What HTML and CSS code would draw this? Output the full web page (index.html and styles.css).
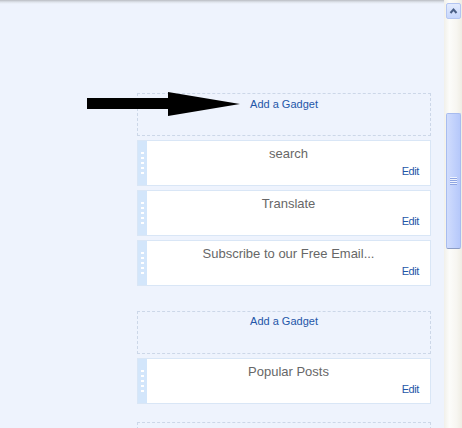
FILE: index.html
```html
<!DOCTYPE html>
<html>
<head>
<meta charset="utf-8">
<title>Layout</title>
<link rel="stylesheet" href="styles.css">
</head>
<body>
<div class="window">
  <div class="main">
    <svg class="arrow" width="154" height="25" viewBox="0 0 154 25" aria-hidden="true">
      <polygon points="0,6 81,6 81,0 153,12 81,24 81,17 0,17" fill="#000"/>
    </svg>
    <div class="column">
      <div class="add-gadget"><a class="link">Add a Gadget</a></div>
      <div class="widget-list">
        <div class="widget">
          <div class="handle"><span class="grip"></span></div>
          <div class="body"><div class="title">search</div><a class="edit">Edit</a></div>
        </div>
        <div class="widget">
          <div class="handle"><span class="grip"></span></div>
          <div class="body"><div class="title">Translate</div><a class="edit">Edit</a></div>
        </div>
        <div class="widget">
          <div class="handle"><span class="grip"></span></div>
          <div class="body"><div class="title">Subscribe to our Free Email...</div><a class="edit">Edit</a></div>
        </div>
      </div>
      <div class="add-gadget section-gap"><a class="link">Add a Gadget</a></div>
      <div class="widget-list">
        <div class="widget">
          <div class="handle"><span class="grip"></span></div>
          <div class="body"><div class="title">Popular Posts</div><a class="edit">Edit</a></div>
        </div>
      </div>
      <div class="add-gadget next-section"></div>
    </div>
  </div>
  <div class="scrollbar">
    <div class="sb-button">
      <svg width="13" height="14" viewBox="0 0 13 14" aria-hidden="true">
        <polyline points="3.5,9 6.5,5.5 9.5,9" fill="none" stroke="#4a5f86" stroke-width="2"/>
      </svg>
    </div>
    <div class="sb-thumb"><span class="sb-grip"></span></div>
  </div>
</div>
</body>
</html>
```

FILE: styles.css
```css
html, body {
  margin: 0;
  padding: 0;
}

body {
  width: 462px;
  height: 428px;
  overflow: hidden;
  font-family: "Liberation Sans", Arial, sans-serif;
  background: #f6f5ef;
}

.window {
  display: flex;
  width: 462px;
  height: 428px;
}

.main {
  position: relative;
  flex: none;
  width: 444px;
  height: 428px;
  box-sizing: border-box;
  padding-top: 93px;
  overflow: hidden;
  background:
    linear-gradient(to bottom, #b9bcc2 0, #dde2ea 2px, #eef3fd 4px) no-repeat top left / 100% 4px,
    #eef3fd;
}

.arrow {
  position: absolute;
  left: 87px;
  top: 92px;
}

.column {
  margin-left: 137px;
  width: 294px;
}

.add-gadget {
  box-sizing: border-box;
  height: 43px;
  border: 1px dashed #ccd7e8;
  padding-top: 4px;
  text-align: center;
  font-size: 11px;
  line-height: 13px;
}

.link,
.edit {
  color: #2356a8;
  text-decoration: none;
}

.section-gap {
  margin-top: 25px;
  padding-top: 3px;
}

.next-section {
  margin-top: 18px;
}

.widget-list {
  display: flex;
  flex-direction: column;
  gap: 4px;
  margin-top: 4px;
}

.widget {
  display: flex;
  box-sizing: border-box;
  height: 46px;
  border: 1px solid #d9e6f6;
  background: #ffffff;
}

.handle {
  flex: none;
  width: 9px;
  background: #d3e6fb;
  display: flex;
  align-items: center;
  justify-content: center;
}

.grip {
  display: block;
  width: 3px;
  height: 22px;
  background: repeating-linear-gradient(to bottom, #ffffff 0 2px, transparent 2px 5px);
}

.body {
  flex: 1;
  display: flex;
  flex-direction: column;
  padding-top: 5px;
}

.title {
  text-align: center;
  font-size: 13px;
  line-height: 15px;
  color: #676767;
}

.edit {
  align-self: flex-end;
  margin-top: 4px;
  margin-right: 11px;
  font-size: 11px;
  line-height: 13px;
  letter-spacing: -0.4px;
}

.scrollbar {
  flex: none;
  width: 18px;
  height: 428px;
  box-sizing: border-box;
  padding: 3px 1px 0 2px;
  background: linear-gradient(to right, #f1f0ea 0, #fcfcfa 30%, #f7f6f1 70%, #efede4 100%);
}

.sb-button {
  box-sizing: border-box;
  width: 15px;
  height: 16px;
  border: 1px solid #b3c5f2;
  border-radius: 2px;
  background: linear-gradient(to bottom, #e3ebfe, #c6d6fc);
  display: flex;
  align-items: center;
  justify-content: center;
}

.sb-thumb {
  box-sizing: border-box;
  width: 15px;
  height: 136px;
  margin-top: 94px;
  border: 1px solid #a8bcef;
  border-bottom-color: #8c9cc4;
  border-radius: 2px;
  background: linear-gradient(to right, #d0dcfd, #c0d0fc 60%, #b6c8fa);
  display: flex;
  align-items: center;
  justify-content: center;
}

.sb-grip {
  display: block;
  width: 7px;
  height: 8px;
  background: repeating-linear-gradient(to bottom, #eef3ff 0 1px, #8fa5e2 1px 2px);
}
```
